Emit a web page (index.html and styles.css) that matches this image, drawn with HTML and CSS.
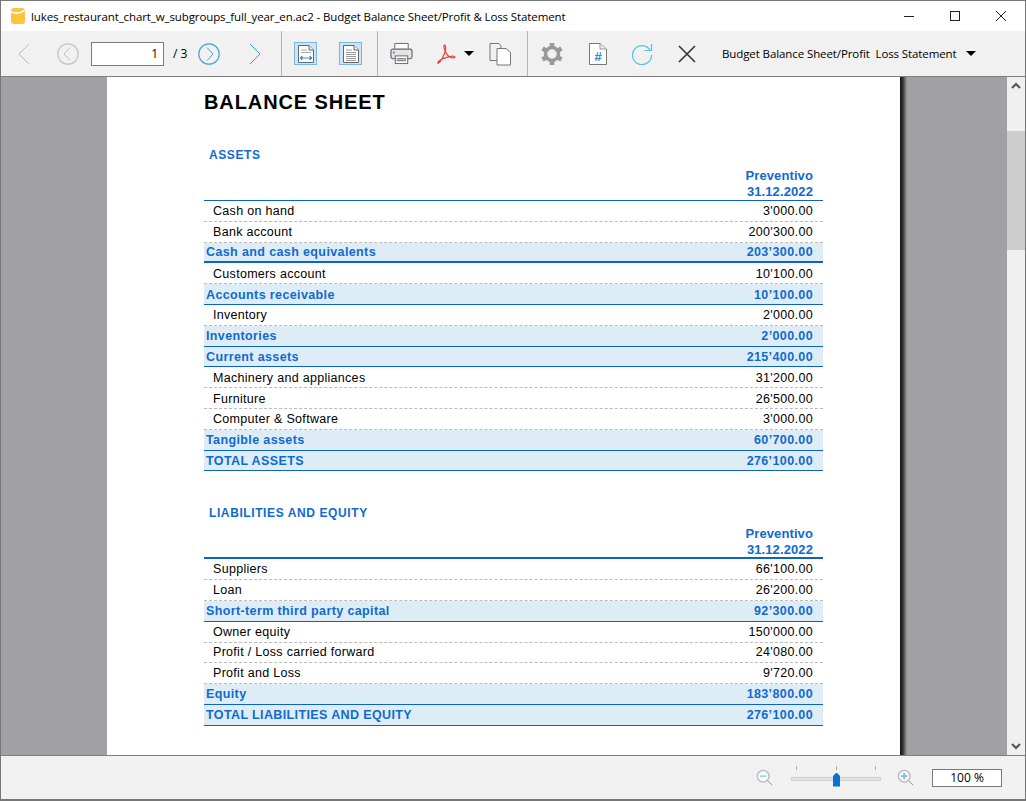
FILE: index.html
```html
<!DOCTYPE html>
<html lang="en">
<head>
    <meta charset="UTF-8">
    <title>Budget Balance Sheet</title>
    <link rel="stylesheet" href="styles.css">
</head>
<body>
<div class="window">
    <div class="titlebar">
        <svg class="app-icon" width="14" height="16" viewBox="0 0 14 16"><path d="M0 3 Q0 0 3 0 H11 Q14 0 14 3 V13 Q14 16 11 16 H3 Q0 16 0 13Z" fill="#fdc33c"/><path d="M0 4.5 Q7 8 14 3 V1.5 Q7 6 0 3Z" fill="#fff"/></svg>
        <span class="title">lukes_restaurant_chart_w_subgroups_full_year_en.ac2 - Budget Balance Sheet/Profit &amp; Loss Statement</span>
        <div class="winbtns">
            <svg width="12" height="12" viewBox="0 0 12 12"><path d="M1 6.5H11" stroke="#222" fill="none"/></svg>
            <svg width="12" height="12" viewBox="0 0 12 12"><rect x="1.5" y="1.5" width="9" height="9" stroke="#222" fill="none"/></svg>
            <svg width="12" height="12" viewBox="0 0 12 12"><path d="M1 1L11 11M11 1L1 11" stroke="#222" fill="none"/></svg>
        </div>
    </div>

    <div class="toolbar">
        <svg class="ml-17" width="12" height="24" viewBox="0 0 12 24"><path d="M11 2L1 12L11 22" stroke="#bbb" fill="none"/></svg>
        <svg class="ml-27" width="22" height="22" viewBox="0 0 22 22"><circle cx="11" cy="11" r="10.2" stroke="#c4c4c4" stroke-width="1.2" fill="none"/><path d="M13 4.5L7 11L13 17.5" stroke="#bbb" fill="none"/></svg>
        <div class="page-input">1</div>
        <span class="page-total">/ 3</span>
        <svg class="ml-10" width="22" height="22" viewBox="0 0 22 22"><circle cx="11" cy="11" r="10.2" stroke="#4ba3df" stroke-width="1.2" fill="none"/><path d="M9 4.5L15 11L9 17.5" stroke="#4ba3df" fill="none"/></svg>
        <svg class="ml-29" width="12" height="24" viewBox="0 0 12 24"><path d="M1 2L11 12L1 22" stroke="#3f95d6" fill="none"/></svg>
        <div class="sep sep-a"></div>

        <div class="toggle ml-12">
            <svg width="20" height="20" viewBox="0 0 20 20"><path d="M2.5 1.5H13L17.5 6V18.5H2.5Z" stroke="#666" fill="#fff"/><path d="M13 1.5V6H17.5" stroke="#666" fill="#eee"/><path d="M5 6H11M5 8.5H15" stroke="#aaa"/><path d="M4 14H16M4 14L6 12V16ZM16 14L14 12V16Z" stroke="#3f95d6" fill="#3f95d6"/></svg>
        </div>
        <div class="toggle ml-22">
            <svg width="20" height="20" viewBox="0 0 20 20"><path d="M2.5 1.5H13L17.5 6V18.5H2.5Z" stroke="#666" fill="#fff"/><path d="M13 1.5V6H17.5" stroke="#666" fill="#eee"/><path d="M5 6H11M5 8.5H15M5 10.5H15M5 12.5H15M5 14.5H15M5 16.5H15" stroke="#999"/></svg>
        </div>
        <div class="sep sep-b"></div>

        <svg class="ml-12" width="23" height="23" viewBox="0 0 24 24"><path d="M5 7V1.5H19V7" stroke="#666" fill="#fff"/><rect x="1" y="7.5" width="22" height="10" rx="2" stroke="#666" stroke-width="1.2" fill="#e4e4e4"/><rect x="5.5" y="14.5" width="13" height="8" stroke="#666" fill="#fff"/><path d="M7 17.5H17M7 19.5H17" stroke="#888" stroke-width="1.4"/><rect x="3" y="10" width="2" height="2" fill="#3f95d6"/></svg>
        <svg class="ml-23" width="21" height="22" viewBox="0 0 22 24"><path d="M2 22C5 20 9 13 10 7C10.5 3 9 1.5 8.3 2.5C7.5 4.5 10 12 14 15C17 17 21 16.5 20 15C19 13.5 11 15 5 18C2 19.5 0.5 22.5 2 22Z" stroke="#ee3d3d" stroke-width="1.3" fill="none"/></svg>
        <div class="arrow ml-7"></div>
        <svg class="ml-14" width="24" height="24" viewBox="0 0 24 24"><path d="M2 1.5H11L13 4V18.5H2Z" stroke="#777" fill="#f1f1f1"/><path d="M9 6.5H18L22.5 10.5V23H9Z" stroke="#777" fill="#fff"/></svg>
        <div class="sep sep-c"></div>

        <svg class="ml-12" width="24" height="24" viewBox="0 0 24 24"><path d="M12 1V6M12 18V23M2.5 6.5L6.8 9M17.2 15L21.5 17.5M2.5 17.5L6.8 15M17.2 9L21.5 6.5" stroke="#999" stroke-width="4.5"/><circle cx="12" cy="12" r="6.5" stroke="#999" stroke-width="3.5" fill="#f1f1f1"/></svg>
        <svg class="ml-24" width="20" height="24" viewBox="0 0 20 24"><path d="M1.5 1.5H12L18.5 7V22.5H1.5Z" stroke="#777" fill="#fff"/><path d="M12 1.5V7H18.5" stroke="#999" fill="#eee"/><text class="hash" x="10" y="19" text-anchor="middle">#</text></svg>
        <svg class="ml-23" width="22" height="22" viewBox="0 0 22 22"><path d="M19 7A9.5 9.5 0 1 0 20.5 12" stroke="#55c1dc" stroke-width="1.2" fill="none"/><path d="M20.5 1V7.5H13.5" stroke="#55c1dc" stroke-width="1.2" fill="none"/></svg>
        <svg class="ml-25" width="18" height="18" viewBox="0 0 18 18"><path d="M1 1L17 17M17 1L1 17" stroke="#333" stroke-width="1.6" fill="none"/></svg>
        <span class="doc-select">Budget Balance Sheet/Profit&nbsp; Loss Statement</span>
        <div class="arrow ml-9"></div>
    </div>

    <div class="main">
        <div class="viewer">
            <div class="page">
                <h1>BALANCE SHEET</h1>

                <h2>ASSETS</h2>
                <div class="col-head">Preventivo<br>31.12.2022</div>
                <div class="report">
                    <div class="row"><span>Cash on hand</span><span>3'000.00</span></div>
                    <div class="row"><span>Bank account</span><span>200'300.00</span></div>
                    <div class="row total thick"><span>Cash and cash equivalents</span><span>203’300.00</span></div>
                    <div class="row"><span>Customers account</span><span>10'100.00</span></div>
                    <div class="row total"><span>Accounts receivable</span><span>10’100.00</span></div>
                    <div class="row"><span>Inventory</span><span>2'000.00</span></div>
                    <div class="row total"><span>Inventories</span><span>2’000.00</span></div>
                    <div class="row total"><span>Current assets</span><span>215’400.00</span></div>
                    <div class="row"><span>Machinery and appliances</span><span>31'200.00</span></div>
                    <div class="row"><span>Furniture</span><span>26'500.00</span></div>
                    <div class="row"><span>Computer &amp; Software</span><span>3'000.00</span></div>
                    <div class="row total"><span>Tangible assets</span><span>60’700.00</span></div>
                    <div class="row total"><span>TOTAL ASSETS</span><span>276’100.00</span></div>
                </div>

                <h2 class="second">LIABILITIES AND EQUITY</h2>
                <div class="col-head thick-line">Preventivo<br>31.12.2022</div>
                <div class="report tight">
                    <div class="row"><span>Suppliers</span><span>66'100.00</span></div>
                    <div class="row"><span>Loan</span><span>26'200.00</span></div>
                    <div class="row total"><span>Short-term third party capital</span><span>92’300.00</span></div>
                    <div class="row"><span>Owner equity</span><span>150'000.00</span></div>
                    <div class="row"><span>Profit / Loss carried forward</span><span>24'080.00</span></div>
                    <div class="row"><span>Profit and Loss</span><span>9'720.00</span></div>
                    <div class="row total"><span>Equity</span><span>183’800.00</span></div>
                    <div class="row total"><span>TOTAL LIABILITIES AND EQUITY</span><span>276’100.00</span></div>
                </div>
            </div>
            <div class="page-shadow"></div>
        </div>
        <div class="scrollbar">
            <svg width="18" height="18" viewBox="0 0 18 18"><path d="M5 11L9 7L13 11" stroke="#555" stroke-width="2" fill="none"/></svg>
            <div class="scroll-gap"></div>
            <div class="scroll-thumb"></div>
            <div class="scroll-rest"></div>
            <svg width="18" height="18" viewBox="0 0 18 18"><path d="M5 7L9 11L13 7" stroke="#555" stroke-width="2" fill="none"/></svg>
        </div>
    </div>

    <div class="statusbar">
        <svg width="18" height="18" viewBox="0 0 20 20"><circle cx="8" cy="8" r="6.5" stroke="#bbb" stroke-width="1.5" fill="#f8f8f8"/><path d="M4.5 8H11.5" stroke="#a5cfee" stroke-width="2"/><path d="M13 13L18 18" stroke="#888"/></svg>
        <div class="slider">
            <div class="ticks"><i></i><i></i><i></i></div>
            <div class="track"></div>
            <div class="thumb"></div>
        </div>
        <svg width="18" height="18" viewBox="0 0 20 20"><circle cx="8" cy="8" r="6.5" stroke="#bbb" stroke-width="1.5" fill="#f8f8f8"/><path d="M4.5 8H11.5M8 4.5V11.5" stroke="#7db9e6" stroke-width="2"/><path d="M13 13L18 18" stroke="#888"/></svg>
        <div class="zoom-box">100 %</div>
    </div>
</div>
</body>
</html>
```

FILE: styles.css
```css
* {
    box-sizing: border-box;
}
html, body {
    margin: 0;
    padding: 0;
}
body {
    font-family: "Liberation Sans", Arial, sans-serif;
    color: #000;
}
.window {
    width: 1026px;
    height: 801px;
    border: 1px solid #777;
    border-bottom-width: 2px;
    display: flex;
    flex-direction: column;
    overflow: hidden;
    background: #fff;
}

/* title bar */
.titlebar {
    height: 30px;
    flex: none;
    display: flex;
    align-items: center;
    background: #fff;
    padding-left: 10px;
}
.title {
    font-family: "Open Sans", sans-serif;
    font-size: 11.5px;
    letter-spacing: -0.11px;
    margin-left: 6px;
}
.winbtns {
    margin-left: auto;
    margin-right: 18px;
    display: flex;
    gap: 34px;
}

/* toolbar */
.toolbar {
    height: 46px;
    flex: none;
    display: flex;
    align-items: center;
    background: #f1f1f1;
    border-bottom: 1px solid #7f7f7f;
}
.toolbar svg {
    flex: none;
}
.ml-7 { margin-left: 7px; }
.ml-9 { margin-left: 9px; }
.ml-10 { margin-left: 10px; }
.ml-12 { margin-left: 12px; }
.ml-14 { margin-left: 14px; }
.ml-17 { margin-left: 17px; }
.ml-22 { margin-left: 22px; }
.ml-23 { margin-left: 23px; }
.ml-24 { margin-left: 24px; }
.ml-25 { margin-left: 25px; }
.ml-27 { margin-left: 27px; }
.ml-29 { margin-left: 29px; }
.page-input {
    width: 73px;
    height: 24px;
    margin-left: 12px;
    border: 1px solid #7a7a7a;
    background: #fff;
    text-align: right;
    font-family: "Open Sans", sans-serif;
    font-size: 12px;
    line-height: 22px;
    padding-right: 5px;
}
.page-total {
    font-family: "Open Sans", sans-serif;
    font-size: 12px;
    margin-left: 9px;
    width: 15px;
    white-space: nowrap;
}
.sep {
    width: 1px;
    height: 45px;
    background: #b5b5b5;
}
.sep-a { margin-left: 20px; }
.sep-b { margin-left: 15px; }
.sep-c { margin-left: 15px; }
.toggle {
    width: 23px;
    height: 23px;
    border: 1px solid #7ab8e4;
    background: #cfe5f6;
    display: flex;
    align-items: center;
    justify-content: center;
}
.arrow {
    width: 0;
    height: 0;
    border-left: 5px solid transparent;
    border-right: 5px solid transparent;
    border-top: 5px solid #000;
}
.hash {
    font-family: "Liberation Sans", sans-serif;
    font-size: 13px;
    font-weight: bold;
    fill: #2b86cf;
}
.doc-select {
    font-family: "Open Sans", sans-serif;
    font-size: 11.5px;
    letter-spacing: -0.1px;
    margin-left: 26px;
    white-space: nowrap;
}

/* viewer */
.main {
    flex: 1;
    min-height: 0;
    display: flex;
}
.viewer {
    flex: 1;
    display: flex;
    background: #a0a0a5;
    padding-left: 106px;
    overflow: hidden;
}
.page {
    width: 793px;
    height: 100%;
    background: #fff;
    padding: 0 77px 0 97px;
    flex: none;
}
.page-shadow {
    width: 7px;
    flex: none;
    background: linear-gradient(to right, #111, #333 40%, #a0a0a5);
}
h1 {
    margin: 0;
    padding-top: 12px;
    font-size: 20px;
    line-height: 26px;
    letter-spacing: 0.9px;
}
h2 {
    margin: 32px 0 0 5px;
    font-size: 12px;
    line-height: 16px;
    letter-spacing: 0.6px;
    color: #0f6ad2;
}
h2.second {
    margin-top: 34px;
}
.col-head {
    margin-top: 4px;
    padding: 1px 10px 0 0;
    text-align: right;
    font-size: 13px;
    letter-spacing: 0.1px;
    line-height: 16px;
    font-weight: bold;
    color: #0f6ad2;
    border-bottom: 1px solid #0a64c0;
    height: 34px;
}
.col-head.thick-line {
    border-bottom-width: 2px;
}
.row {
    height: 20.8px;
    display: flex;
    justify-content: space-between;
    align-items: center;
    padding: 1px 10px 0 9px;
    font-size: 12.5px;
    letter-spacing: 0.3px;
    border-bottom: 1px dashed #bbb;
    white-space: nowrap;
}
.report.tight .row {
    padding-top: 0;
}
.row.total {
    background: #deedf5;
    color: #0f6ad2;
    font-weight: bold;
    letter-spacing: 0.38px;
    padding-left: 2px;
    border-bottom: 1px solid #0a64c0;
}
.row.thick {
    border-bottom-width: 2px;
}

/* scrollbar */
.scrollbar {
    width: 18px;
    flex: none;
    display: flex;
    flex-direction: column;
    background: #f0f0f0;
}
.scrollbar svg {
    flex: none;
}
.scroll-gap {
    height: 36px;
}
.scroll-thumb {
    height: 119px;
    background: #cdcdcd;
}
.scroll-rest {
    flex: 1;
}

/* status bar */
.statusbar {
    height: 44px;
    flex: none;
    display: flex;
    align-items: center;
    justify-content: flex-end;
    background: #f1f1f1;
    border-top: 1px solid #7f7f7f;
    padding-right: 23px;
}
.slider {
    position: relative;
    width: 90px;
    height: 24px;
    margin: 0 16px 0 17px;
}
.ticks {
    display: flex;
    justify-content: space-between;
    padding: 0 5px;
    height: 6px;
}
.ticks i {
    width: 1px;
    height: 4px;
    background: #aaa;
}
.track {
    margin-top: 5px;
    height: 4px;
    background: #e2e2e2;
    border: 1px solid #d0d0d0;
}
.thumb {
    position: absolute;
    left: 42px;
    top: 7px;
    width: 7px;
    height: 14px;
    background: #0a72d4;
    clip-path: polygon(50% 0, 100% 25%, 100% 100%, 0 100%, 0 25%);
}
.zoom-box {
    width: 70px;
    height: 18px;
    margin-left: 17px;
    border: 1px solid #7a7a7a;
    background: #fff;
    text-align: center;
    font-family: "Open Sans", sans-serif;
    font-size: 12px;
    line-height: 16px;
}
```
